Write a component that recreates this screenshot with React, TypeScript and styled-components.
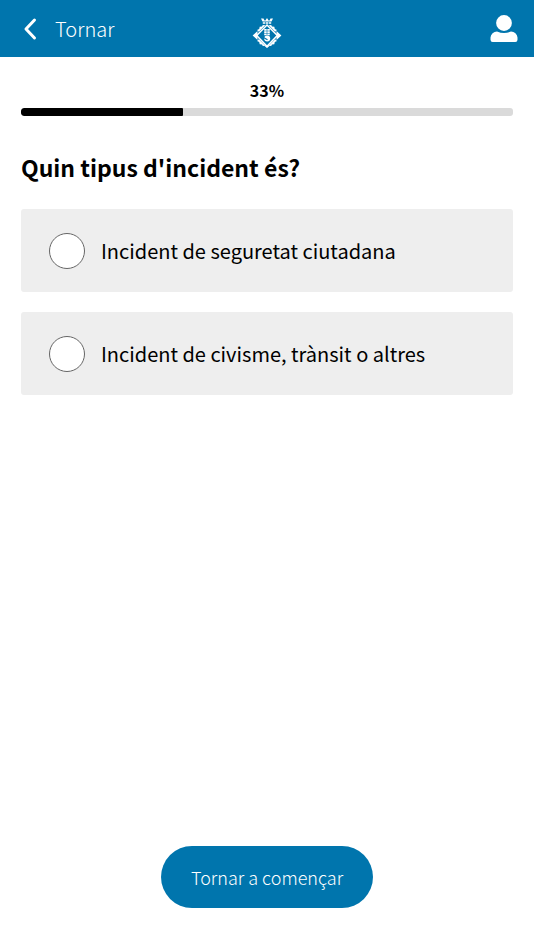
import React, { useState } from "react";
import styled, { createGlobalStyle } from "styled-components";

const GlobalStyle = createGlobalStyle`
  *, *::before, *::after { box-sizing: border-box; }
  body {
    margin: 0;
    background: #fff;
    color: #000;
    font-family: "Noto Sans CJK SC", "Noto Sans", sans-serif;
  }
`;

const Page = styled.div`
  min-height: 100vh;
  display: flex;
  flex-direction: column;
`;

const Header = styled.header`
  display: grid;
  grid-template-columns: 1fr auto 1fr;
  align-items: center;
  height: 57px;
  padding: 0 16px;
  background: #0075ad;
  color: #fff;
`;

const BackButton = styled.button`
  display: flex;
  align-items: center;
  justify-self: start;
  gap: 16px;
  padding: 0 6px;
  border: 0;
  background: none;
  color: inherit;
  font: inherit;
  font-weight: 300;
  font-size: 20px;
  line-height: 30px;
  cursor: pointer;
`;

const LogoLink = styled.a`
  display: flex;
  padding-top: 8px;
`;

const UserButton = styled.button`
  display: flex;
  justify-self: end;
  padding: 0;
  border: 0;
  background: none;
  color: inherit;
  cursor: pointer;
`;

const Main = styled.main`
  flex: 1;
  display: flex;
  flex-direction: column;
  padding: 21px 21px 42px;
`;

const ProgressLabel = styled.div`
  font-weight: 700;
  font-size: 16px;
  line-height: 24px;
  text-align: center;
`;

const Track = styled.div`
  height: 8px;
  margin-top: 6px;
  border-radius: 3px;
  background: #dadada;
  overflow: hidden;
`;

const Fill = styled.div`
  height: 100%;
  border-radius: 3px 1px 1px 3px;
  background: #000;
`;

const Question = styled.fieldset`
  min-width: 0;
  margin: 33px 0 0;
  padding: 0;
  border: 0;
`;

const Title = styled.legend`
  padding: 0;
  font-weight: 700;
  font-size: 23px;
  line-height: 36px;
`;

const Options = styled.div`
  display: flex;
  flex-direction: column;
  gap: 20px;
  margin-top: 24px;
`;

const Option = styled.label`
  display: flex;
  align-items: center;
  gap: 16px;
  min-height: 83px;
  padding: 16px 28px;
  border-radius: 3px;
  background: #eee;
  font-weight: 400;
  font-size: 20px;
  line-height: 30px;
  cursor: pointer;
`;

const Radio = styled.input`
  appearance: none;
  flex: none;
  width: 36px;
  height: 36px;
  margin: 0;
  border: 1px solid #666;
  border-radius: 50%;
  background: #fff;

  &:checked {
    background: #0075ad;
    box-shadow: inset 0 0 0 7px #fff;
  }
`;

const RestartButton = styled.button`
  align-self: center;
  margin-top: auto;
  padding: 16px 30px;
  border: 0;
  border-radius: 31px;
  background: #0075ad;
  color: #fff;
  font: inherit;
  font-weight: 300;
  font-size: 18px;
  line-height: 30px;
  cursor: pointer;
`;

const BackIcon = () => (
  <svg width="17" height="24" viewBox="0 0 17 24" fill="none" aria-hidden="true">
    <path d="M12.500 3 4 12l8.500 9" stroke="#fff" strokeWidth="3" strokeLinecap="round" strokeLinejoin="round" />
  </svg>
);

const UserIcon = () => (
  <svg width="28" height="28" viewBox="0 0 28 28" fill="#fff" aria-hidden="true">
    <circle cx="14" cy="8" r="7.900" />
    <path d="M7 16.500q7 3 14 0a6.500 6.500 0 0 1 6.500 6v2.300a2.200 2.200 0 0 1-2.200 2.200H2.700A2.200 2.200 0 0 1 .5 24.800v-2.300a6.500 6.500 0 0 1 6.500-6Z" />
  </svg>
);

const CityLogo = () => (
  <svg width="30" height="32" viewBox="0 0 30 32" fill="#fff" aria-hidden="true">
    <path d="m9 1.500 2.500 0 1 2h1l1-2h1l1 2h1l1-2H21l-1.500 3h-9zM10.800 5.200h2.400v1.600h-2.400zM13.800 5.200h2.400v1.600h-2.400zM16.800 5.200h2.400v1.600h-2.400z" />
    <path d="m15 8 10.300 10.500L15 29.300 4.700 18.500Z" fill="none" stroke="#fff" strokeWidth="1.500" />
    <path d="m5 13 2.200-1 .5-2.300 2.300-.2.800-1.500 2.500.2-6.500 6.500zM25 13l-2.200-1-.5-2.300-2.300-.2-.8-1.500-2.500.2 6.500 6.500zM5 24l2.200 1 .5 2.300 2.300.2.800 1.500 2.500-.2-6.500-6.500zM25 24l-2.200 1-.5 2.300-2.300.2-.8 1.500-2.500-.2 6.500-6.500z" />
    <path d="M.6 18.500 5.500 14v9zM29.400 18.500 24.500 14v9zM12 28.500h6L15 31z" />
    <path d="M12.200 12h2.500v1.700h-2.500zM15.300 12h2.500v1.700h-2.500zM12.200 14.300h2.500V16h-2.500zM15.300 14.300h2.500V16h-2.500zM12.200 16.600h2.500v1.700h-2.500zM15.300 16.600h2.500v1.700h-2.500z" />
    <circle cx="15.200" cy="21.600" r="3" />
    <path d="m11.500 20.500 4 2.200" stroke="#0075ad" strokeWidth="1.300" />
  </svg>
);

const OPTIONS = [
  { value: "seguretat", label: "Incident de seguretat ciutadana" },
  { value: "civisme", label: "Incident de civisme, trànsit o altres" },
];

export default function App() {
  const [selected, setSelected] = useState("");
  const progress = 33;

  return (
    <Page>
      <GlobalStyle />
      <Header>
        <BackButton type="button">
          <BackIcon />
          Tornar
        </BackButton>
        <LogoLink href="#" aria-label="Inici">
          <CityLogo />
        </LogoLink>
        <UserButton type="button" aria-label="Usuari">
          <UserIcon />
        </UserButton>
      </Header>
      <Main>
        <ProgressLabel id="progress-label">{progress}%</ProgressLabel>
        <Track role="progressbar" aria-labelledby="progress-label" aria-valuenow={progress} aria-valuemin={0} aria-valuemax={100}>
          <Fill style={{ width: `${progress}%` }} />
        </Track>
        <Question>
          <Title>Quin tipus d'incident és?</Title>
          <Options>
            {OPTIONS.map(({ value, label }) => (
              <Option key={value} htmlFor={value}>
                <Radio
                  type="radio"
                  id={value}
                  name="incident"
                  value={value}
                  checked={selected === value}
                  onChange={() => setSelected(value)}
                />
                {label}
              </Option>
            ))}
          </Options>
        </Question>
        <RestartButton type="button" onClick={() => setSelected("")}>
          Tornar a començar
        </RestartButton>
      </Main>
    </Page>
  );
}
